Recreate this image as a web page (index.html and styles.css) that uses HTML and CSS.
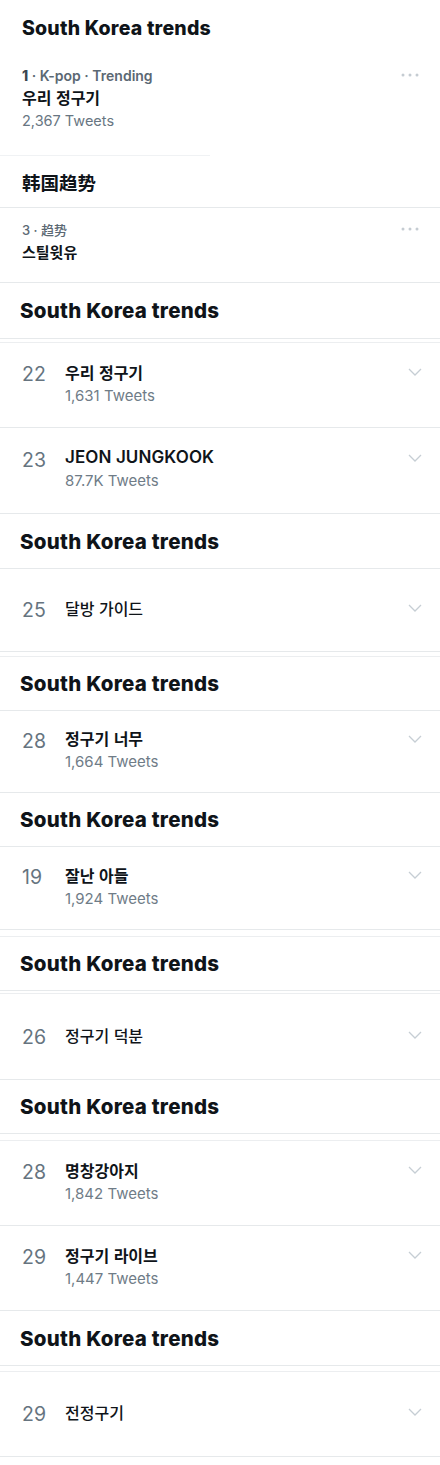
FILE: index.html
```html
<!DOCTYPE html>
<html lang="ko">
<head>
<meta charset="utf-8">
<title>South Korea trends</title>
<link rel="stylesheet" href="styles.css">
</head>
<body>
<main class="feed">
  <div class="hdr hdr-first">South Korea trends</div>
  <div class="card card-one">
    <div class="card-body">
      <div class="meta"><b>1</b> · K-pop · Trending</div>
      <div class="card-title">우리 정구기</div>
      <div class="card-count">2,367 Tweets</div>
    </div>
    <svg class="dots" width="18" height="4" viewBox="0 0 18 4"><circle cx="2" cy="2" r="1.5"/><circle cx="9" cy="2" r="1.5"/><circle cx="16" cy="2" r="1.5"/></svg>
  </div>
  <div class="hdr hdr-cn">韩国趋势</div>
  <div class="card card-two">
    <div class="card-body">
      <div class="meta meta-cn">3 · 趋势</div>
      <div class="card-title title-small">스틸윗유</div>
    </div>
    <svg class="dots" width="18" height="4" viewBox="0 0 18 4"><circle cx="2" cy="2" r="1.5"/><circle cx="9" cy="2" r="1.5"/><circle cx="16" cy="2" r="1.5"/></svg>
  </div>

  <div class="hdr h56">South Korea trends</div>
  <div class="seam s4"></div>
  <div class="row h85"><span class="rank">22</span><div class="txt"><div class="name">우리 정구기</div><div class="count">1,631 Tweets</div></div><svg class="chev" width="14" height="8" viewBox="0 0 14 8"><path d="M1 1l6 6 6-6"/></svg></div>
  <div class="row h86"><span class="rank">23</span><div class="txt"><div class="name latin">JEON JUNGKOOK</div><div class="count">87.7K Tweets</div></div><svg class="chev" width="14" height="8" viewBox="0 0 14 8"><path d="M1 1l6 6 6-6"/></svg></div>

  <div class="hdr h55">South Korea trends</div>
  <div class="row h83 single"><span class="rank">25</span><div class="txt"><div class="name">달방 가이드</div></div><svg class="chev" width="14" height="8" viewBox="0 0 14 8"><path d="M1 1l6 6 6-6"/></svg></div>
  <div class="seam s5"></div>

  <div class="hdr h54">South Korea trends</div>
  <div class="row h82"><span class="rank">28</span><div class="txt"><div class="name">정구기 너무</div><div class="count">1,664 Tweets</div></div><svg class="chev" width="14" height="8" viewBox="0 0 14 8"><path d="M1 1l6 6 6-6"/></svg></div>

  <div class="hdr h54">South Korea trends</div>
  <div class="row h83"><span class="rank">19</span><div class="txt"><div class="name">잘난 아들</div><div class="count">1,924 Tweets</div></div><svg class="chev" width="14" height="8" viewBox="0 0 14 8"><path d="M1 1l6 6 6-6"/></svg></div>
  <div class="seam s7"></div>

  <div class="hdr h54">South Korea trends</div>
  <div class="seam s3"></div>
  <div class="row h86 single"><span class="rank">26</span><div class="txt"><div class="name">정구기 덕분</div></div><svg class="chev" width="14" height="8" viewBox="0 0 14 8"><path d="M1 1l6 6 6-6"/></svg></div>

  <div class="hdr h54">South Korea trends</div>
  <div class="seam s7"></div>
  <div class="row h85"><span class="rank">28</span><div class="txt"><div class="name">명창강아지</div><div class="count">1,842 Tweets</div></div><svg class="chev" width="14" height="8" viewBox="0 0 14 8"><path d="M1 1l6 6 6-6"/></svg></div>
  <div class="row h85"><span class="rank">29</span><div class="txt"><div class="name">정구기 라이브</div><div class="count">1,447 Tweets</div></div><svg class="chev" width="14" height="8" viewBox="0 0 14 8"><path d="M1 1l6 6 6-6"/></svg></div>

  <div class="hdr h55">South Korea trends</div>
  <div class="seam s6"></div>
  <div class="row h85 single"><span class="rank">29</span><div class="txt"><div class="name">전정구기</div></div><svg class="chev" width="14" height="8" viewBox="0 0 14 8"><path d="M1 1l6 6 6-6"/></svg></div>
</main>
</body>
</html>
```
FILE: styles.css
```css
* { box-sizing: border-box; }
html, body { margin: 0; padding: 0; background: #ffffff; }
body {
  font-family: Inter, "Noto Sans CJK KR", "Noto Sans", sans-serif;
  color: #0f1419;
  width: 440px;
}
.feed { display: flex; flex-direction: column; }

.hdr {
  display: flex;
  align-items: center;
  padding-left: 20px;
  font-size: 20.5px;
  font-weight: 800;
  letter-spacing: 0.25px;
  border-bottom: 1px solid #e6e9eb;
}
.hdr-first {
  height: 50px;
  padding-left: 22px;
  padding-top: 6px;
  font-size: 19.5px;
  letter-spacing: 0.2px;
  border-bottom: none;
}
.hdr-cn {
  height: 52px;
  padding-left: 22px;
  padding-top: 1px;
  font-family: "Noto Sans CJK SC", sans-serif;
  font-size: 18.5px;
  font-weight: 700;
  letter-spacing: 0;
}
.h54 { height: 54px; }
.h55 { height: 55px; }
.h56 { height: 56px; }

.card {
  display: flex;
  align-items: flex-start;
  justify-content: space-between;
  padding: 0 22px;
  position: relative;
}
.card-one { height: 106px; padding-top: 16px; }
.card-one::after {
  content: "";
  position: absolute;
  left: 0; bottom: 0;
  width: 210px; height: 1px;
  background: #f0f2f4;
}
.card-two { height: 75px; padding-top: 12px; border-bottom: 1px solid #e6e9eb; }
.card-body { display: flex; flex-direction: column; }
.meta {
  font-size: 14px;
  font-weight: 600;
  color: #5b6873;
  line-height: 20px;
}
.meta b { color: #3b4650; font-weight: 800; }
.meta-cn { font-family: Inter, "Noto Sans CJK SC", sans-serif; font-weight: 500; font-size: 13px; }
.card-title {
  font-family: "Noto Sans CJK KR", sans-serif;
  font-size: 16px;
  font-weight: 700;
  line-height: 23px;
}
.title-small { font-size: 15px; }
.card-count {
  font-size: 14.5px;
  color: #687682;
  line-height: 23px;
}
.dots { fill: #c5ccd2; margin-top: 7px; margin-right: -1px; }

.seam { border-bottom: 1px solid #eceef0; }
.s3 { height: 3px; }
.s4 { height: 4px; }
.s5 { height: 5px; }
.s6 { height: 6px; }
.s7 { height: 7px; }

.row {
  display: flex;
  align-items: center;
  padding: 0 18px 0 22px;
  border-bottom: 1px solid #e6e9eb;
}
.h82 { height: 82px; }
.h83 { height: 83px; }
.h85 { height: 85px; }
.h86 { height: 86px; }
.rank {
  width: 43px;
  flex: none;
  font-size: 19.5px;
  color: #66747f;
  font-weight: 400;
  margin-top: -22px;
}
.single .rank { margin-top: 0; }
.txt { flex: 1; display: flex; flex-direction: column; margin-top: -3px; }
.single .txt { margin-top: -4px; }
.name {
  font-family: "Noto Sans CJK KR", sans-serif;
  font-size: 16px;
  font-weight: 600;
  line-height: 24px;
}
.single .name { font-weight: 500; }
.name.latin { font-family: Inter, sans-serif; font-weight: 600; font-size: 17px; letter-spacing: 0.1px; }
.count {
  font-size: 15px;
  color: #6f7c87;
  line-height: 24px;
}
.chev {
  flex: none;
  fill: none;
  stroke: #c6ced4;
  stroke-width: 1.3;
  margin-top: -26px;
}
.single .chev { margin-top: -4px; }
```
